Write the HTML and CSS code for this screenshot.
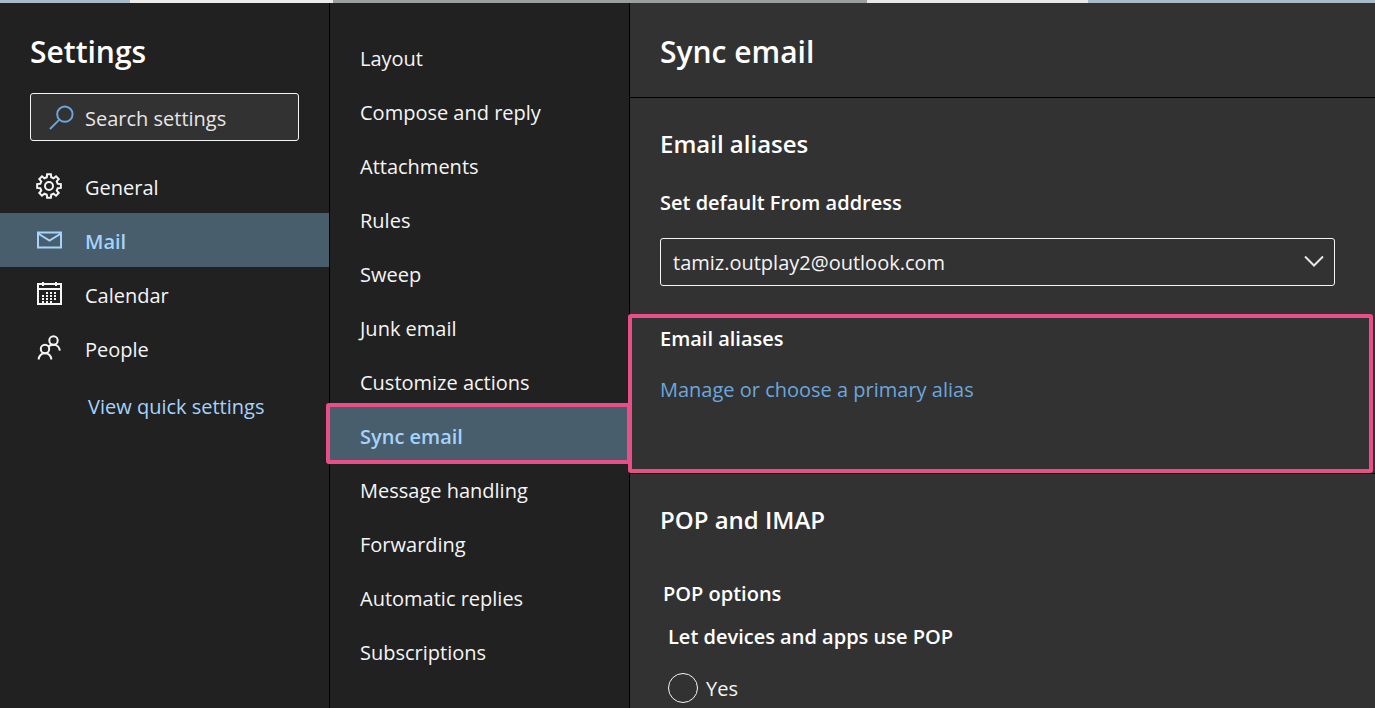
FILE: index.html
```html
<!DOCTYPE html>
<html lang="en">
<head>
<meta charset="utf-8">
<meta name="viewport" content="width=device-width, initial-scale=1">
<title>Settings</title>
<link rel="stylesheet" href="styles.css">
</head>
<body>
<div class="backdrop" aria-hidden="true"></div>
<div class="settings">
  <aside class="sidebar">
    <h1 class="title">Settings</h1>
    <label class="search">
      <svg class="search-icon" viewBox="0 0 26 26" aria-hidden="true"><circle cx="16.500" cy="9.500" r="8"/><path d="M10.800 15.200 1 25"/></svg>
      <input class="search-input" type="search" placeholder="Search settings" aria-label="Search settings">
    </label>
    <nav class="categories" aria-label="Settings categories">
      <a class="category" href="#general">
        <svg class="icon" viewBox="0 0 26 26" aria-hidden="true"><path d="M10.780 4.291 L11.106 1.152 L14.894 1.152 L15.220 4.291 L17.588 5.272 L20.039 3.283 L22.717 5.961 L20.728 8.412 L21.709 10.780 L24.848 11.106 L24.848 14.894 L21.709 15.220 L20.728 17.588 L22.717 20.039 L20.039 22.717 L17.588 20.728 L15.220 21.709 L14.894 24.848 L11.106 24.848 L10.780 21.709 L8.412 20.728 L5.961 22.717 L3.283 20.039 L5.272 17.588 L4.291 15.220 L1.152 14.894 L1.152 11.106 L4.291 10.780 L5.272 8.412 L3.283 5.961 L5.961 3.283 L8.412 5.272 Z"/><circle cx="13" cy="13" r="4"/></svg>
        <span>General</span>
      </a>
      <a class="category selected" href="#mail" aria-current="page">
        <svg class="icon" viewBox="0 0 26 26" aria-hidden="true"><path d="M2 5.500h23v15h-23zM2 6.500 13.500 13.500l11.500-7"/></svg>
        <span>Mail</span>
      </a>
      <a class="category" href="#calendar">
        <svg class="icon" viewBox="0 0 26 26" aria-hidden="true"><path d="M2 3h23v20h-23zM2 8h23M7 1v4M20 1v4"/><path class="dots" d="M10 12h12M6 15h16M6 18h16M6 21h11"/></svg>
        <span>Calendar</span>
      </a>
      <a class="category" href="#people">
        <svg class="icon" viewBox="0 0 26 26" aria-hidden="true"><circle cx="17.500" cy="5.500" r="4.200"/><circle cx="9" cy="14" r="4.200"/><path d="M2.700 24.500c0-3.700 2.800-6.300 6.300-6.300s6.300 2.600 6.300 6.300M12.300 11.700c1-1.300 3-2 5.200-2 3.500 0 6 2.500 6.300 6"/></svg>
        <span>People</span>
      </a>
    </nav>
    <a class="quick-link" href="#quick">View quick settings</a>
  </aside>

  <nav class="subnav" aria-label="Mail settings">
    <a class="item" href="#layout">Layout</a>
    <a class="item" href="#compose">Compose and reply</a>
    <a class="item" href="#attachments">Attachments</a>
    <a class="item" href="#rules">Rules</a>
    <a class="item" href="#sweep">Sweep</a>
    <a class="item" href="#junk">Junk email</a>
    <a class="item" href="#customize">Customize actions</a>
    <a class="item item-current" href="#sync" aria-current="page">Sync email</a>
    <a class="item" href="#handling">Message handling</a>
    <a class="item" href="#forwarding">Forwarding</a>
    <a class="item" href="#replies">Automatic replies</a>
    <a class="item" href="#subscriptions">Subscriptions</a>
  </nav>

  <main class="content">
    <header class="content-header"><h2 class="title">Sync email</h2></header>
    <section class="section">
      <h3 class="heading">Email aliases</h3>
      <label class="field-label" for="from">Set default From address</label>
      <div class="select-wrap">
        <select class="select" id="from"><option>tamiz.outplay2@outlook.com</option></select>
        <svg class="chevron" viewBox="0 0 20 12" aria-hidden="true"><path d="m1 1.500 9 9 9-9"/></svg>
      </div>
    </section>
    <section class="section aliases">
      <h4 class="subheading">Email aliases</h4>
      <a class="alias-link" href="#aliases">Manage or choose a primary alias</a>
    </section>
    <section class="section pop">
      <h3 class="heading">POP and IMAP</h3>
      <h4 class="subheading pop-options">POP options</h4>
      <fieldset class="choices">
        <legend class="subheading">Let devices and apps use POP</legend>
        <label class="choice"><input class="radio" type="radio" name="pop" value="yes"><span>Yes</span></label>
      </fieldset>
    </section>
  </main>
</div>
</body>
</html>
```
FILE: styles.css
```css
* { box-sizing: border-box; }

body {
  margin: 0;
  min-height: 100vh;
  display: flex;
  flex-direction: column;
  background: #212121;
  color: #f5f5f5;
  font-family: "Open Sans", "Noto Sans", sans-serif;
  font-size: 20px;
  line-height: 28px;
}

a { color: inherit; text-decoration: none; }
h1, h2, h3, h4 { margin: 0; font-weight: 600; color: #fff; }

.backdrop {
  height: 3px;
  background: linear-gradient(90deg, #a9bac8 0 130px, #ececec 130px 333px, #9c9fa0 333px 867px, #e8e8e8 867px 1088px, #a9bac8 1088px);
}

.settings {
  flex: 1;
  display: grid;
  grid-template-columns: 330px 300px minmax(0, 1fr);
}

.title { font-size: 30px; line-height: 40px; }

.sidebar { border-right: 1px solid #000; padding-top: 29px; }
.sidebar .title { margin: 0 30px; }

.search {
  display: flex;
  align-items: center;
  gap: 11px;
  height: 48px;
  margin: 21px 30px 18px;
  padding: 0 18px;
  border: 1px solid #f5f5f5;
  border-radius: 3px;
  background: #323232;
}
.search-icon { flex: none; width: 25px; height: 25px; fill: none; stroke: #6ba7dc; stroke-width: 2; }
.search-input {
  flex: 1;
  min-width: 0;
  padding: 4px 0 0;
  border: 0;
  outline: 0;
  background: none;
  color: inherit;
  font: inherit;
}
.search-input::placeholder { color: #e6e6e6; opacity: 1; }

.category {
  display: flex;
  align-items: center;
  gap: 23px;
  height: 54px;
  padding-left: 36px;
}
.category span { padding-top: 4px; }
.icon { width: 26px; height: 26px; fill: none; stroke: currentColor; stroke-width: 2; }
.dots { stroke-dasharray: 2 2; }
.selected { background: #485e6c; color: #a5d3fb; font-weight: 600; }
.quick-link { display: inline-block; margin: 18px 0 0 88px; color: #a5d3fb; }

.subnav { border-right: 1px solid #000; padding-top: 26px; }
.item {
  display: flex;
  align-items: center;
  height: 54px;
  padding: 6px 30px 0;
}
.item-current { position: relative; background: #485e6c; color: #a5d3fb; font-weight: 600; }
.item-current::after {
  content: "";
  position: absolute;
  inset: -4px -2px -3px -4px;
  border: 4px solid #e94e86;
  border-radius: 3px;
}

.content { background: #323232; }
.content-header { padding: 29px 30px 25px; border-bottom: 1px solid #000; }
.section { padding: 0 40px 0 30px; }
.heading { padding-top: 30px; font-size: 24px; line-height: 32px; }
.field-label { display: block; margin: 29px 0 21px; font-weight: 600; color: #fff; }

.select-wrap { position: relative; margin-bottom: 28px; }
.select {
  width: 100%;
  height: 48px;
  padding: 2px 48px 0 12px;
  border: 1px solid #f5f5f5;
  border-radius: 3px;
  appearance: none;
  background: #323232;
  color: inherit;
  font: inherit;
}
.chevron {
  position: absolute;
  right: 11px;
  top: 17px;
  width: 20px;
  height: 12px;
  fill: none;
  stroke: #e6e6e6;
  stroke-width: 2;
  pointer-events: none;
}

.aliases { position: relative; padding-top: 11px; padding-bottom: 69px; border-bottom: 1px solid #000; }
.aliases::after {
  content: "";
  position: absolute;
  inset: 0 2px 0 -2px;
  border: 4px solid #e94e86;
  border-radius: 3px;
  pointer-events: none;
}
.subheading { font-size: 20px; line-height: 28px; }
.alias-link { display: inline-block; margin-top: 23px; color: #6ba7dc; }

.pop-options { margin: 44px 3px 0; }
.choices { margin: 15px 0 0 8px; padding: 0; border: 0; }
.choices legend { padding: 0; font-weight: 600; color: #fff; }
.choice { display: flex; align-items: center; gap: 8px; margin-top: 22px; }
.choice span { padding-top: 2px; }
.radio {
  width: 30px;
  height: 30px;
  margin: 0;
  border: 1px solid #f5f5f5;
  border-radius: 50%;
  appearance: none;
}
.radio:checked { background: radial-gradient(#f5f5f5 50%, transparent 52%); }
```
